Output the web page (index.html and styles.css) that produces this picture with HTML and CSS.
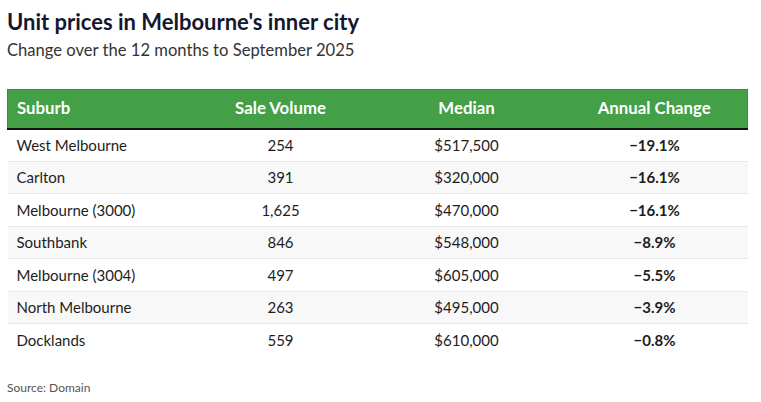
FILE: index.html
```html
<!DOCTYPE html>
<html lang="en">
<head>
<meta charset="utf-8">
<link rel="stylesheet" href="styles.css">
</head>
<body>
<div class="chart">
  <h1 class="title">Unit prices in Melbourne's inner city</h1>
  <p class="subtitle">Change over the 12 months to September 2025</p>
  <table class="data">
    <colgroup>
      <col class="c1"><col class="c2"><col class="c3"><col class="c4">
    </colgroup>
    <thead>
      <tr>
        <th class="left">Suburb</th>
        <th>Sale Volume</th>
        <th>Median</th>
        <th>Annual Change</th>
      </tr>
    </thead>
    <tbody>
      <tr><td class="left">West Melbourne</td><td>254</td><td>$517,500</td><td class="bold">−19.1%</td></tr>
      <tr><td class="left">Carlton</td><td>391</td><td>$320,000</td><td class="bold">−16.1%</td></tr>
      <tr><td class="left">Melbourne (3000)</td><td>1,625</td><td>$470,000</td><td class="bold">−16.1%</td></tr>
      <tr><td class="left">Southbank</td><td>846</td><td>$548,000</td><td class="bold">−8.9%</td></tr>
      <tr><td class="left">Melbourne (3004)</td><td>497</td><td>$605,000</td><td class="bold">−5.5%</td></tr>
      <tr><td class="left">North Melbourne</td><td>263</td><td>$495,000</td><td class="bold">−3.9%</td></tr>
      <tr><td class="left">Docklands</td><td>559</td><td>$610,000</td><td class="bold">−0.8%</td></tr>
    </tbody>
  </table>
  <p class="source">Source: Domain</p>
</div>
</body>
</html>
```

FILE: styles.css
```css
* { box-sizing: border-box; }
html, body { margin: 0; padding: 0; background: #fff; }
body { font-family: Lato, "Noto Sans", sans-serif; color: #1d1d1d; }
.chart { padding: 8px 14px 0 7px; }
.title { margin: 0; font-size: 22px; font-weight: 700; color: #15172e; line-height: 28px; }
.subtitle { margin: 2px 0 0 0; font-size: 16.6px; color: #333; line-height: 24px; }
.data { width: 740px; border-collapse: collapse; margin-top: 27px; table-layout: fixed; }
.c1 { width: 182px; }
.c2 { width: 182px; }
.c3 { width: 190px; }
.c4 { width: 186px; }
.data th { background: #43a047; color: #fff; font-size: 16.8px; font-weight: 700; height: 39px; padding: 0 9px 2px; text-align: center; border-bottom: 2px solid #111; border-top: 1px solid #3a8c3e; }
.data th:first-child { border-left: 1px solid #3a8c3e; }
.data th:last-child { border-right: 1px solid #3a8c3e; }
.data td { font-size: 15px; height: 32.5px; padding: 0 9px; text-align: center; border-bottom: 1px solid #e8e8e8; color: #1d1d1d; }
.data tbody tr:nth-child(even) td { background: #f8f8f8; }
.data tbody tr:last-child td { border-bottom: none; }
.data .left { text-align: left; }
.data .bold { font-weight: 700; }
.source { margin: 24px 0 0 0; font-size: 12px; color: #555; }
```
